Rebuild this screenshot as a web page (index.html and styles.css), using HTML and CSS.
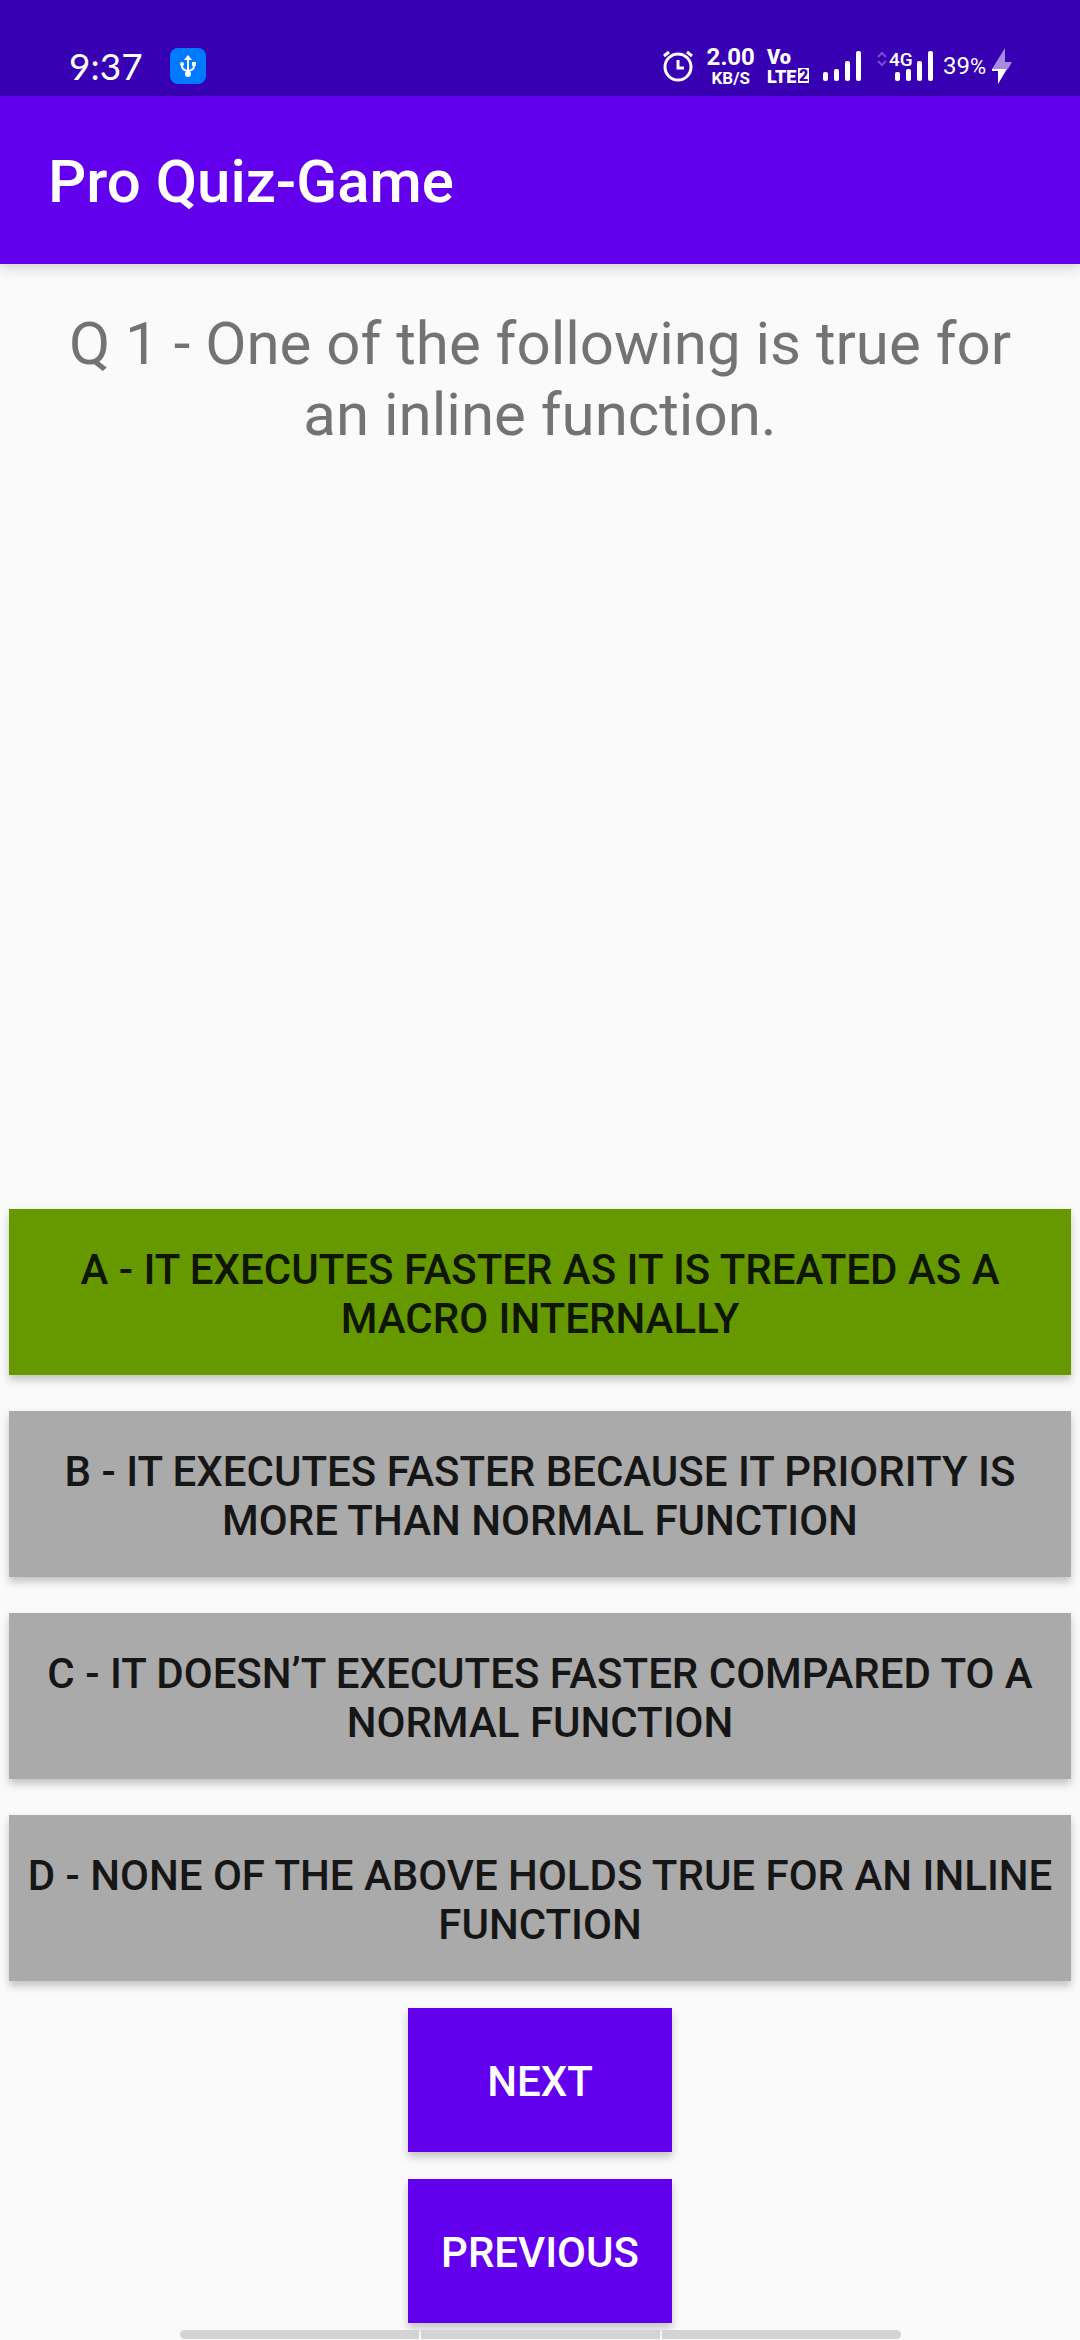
FILE: index.html
```html
<!DOCTYPE html>
<html lang="en">
<head>
<meta charset="utf-8">
<meta name="viewport" content="width=device-width, initial-scale=1">
<title>Pro Quiz-Game</title>
<link rel="stylesheet" href="styles.css">
</head>
<body>
<div class="status">
  <div class="status-left">
    <span class="clock">9:37</span>
    <svg class="usb" width="36" height="36" viewBox="0 0 36 36" aria-hidden="true">
      <rect width="36" height="36" rx="8" fill="#007aff"/>
      <g fill="none" stroke="#fff" stroke-width="2"><path d="M18 9v17M12 16v2q0 4 6 5q6-1 6-5v-2"/></g>
      <path d="M18 7l4 5h-8z" fill="#fff"/><circle cx="12" cy="16" r="2" fill="#fff"/><rect x="22" y="14" width="4" height="4" fill="#fff"/><circle cx="18" cy="26" r="3" fill="#fff"/>
    </svg>
  </div>
  <div class="status-right">
    <svg class="alarm" width="30" height="32" viewBox="0 0 30 32" aria-hidden="true">
      <g fill="none" stroke="#fff" stroke-width="3"><circle cx="15" cy="17" r="13"/><path d="M15 10v8h6M1 6l5-4M29 6l-5-4"/></g>
    </svg>
    <span class="speed"><b class="rate">2.00</b><b class="unit">KB/S</b></span>
    <svg class="volte" width="44" height="48" viewBox="0 -6 44 48" role="img" aria-label="VoLTE 2">
      <g fill="#fff"><text x="1" y="15" class="vo">Vo</text><text x="1" y="34" class="lte">LTE</text><rect x="32" y="19" width="11" height="15"/></g>
      <text x="33" y="32" class="sim">2</text>
    </svg>
    <svg class="signal" width="40" height="30" viewBox="0 0 40 30" aria-hidden="true">
      <g fill="#fff"><rect x="0" y="21" width="5" height="9" rx="2"/><rect x="11" y="18" width="5" height="12" rx="2"/><rect x="22" y="10" width="5" height="20" rx="2"/><rect x="33" y="0" width="5" height="30" rx="2"/></g>
    </svg>
    <svg class="signal4g" width="56" height="36" viewBox="0 -6 56 36" role="img" aria-label="4G signal">
      <g fill="none" stroke="#7350cb" stroke-width="2"><path d="M1 6l4-4l4 4M1 10l4 4l4-4"/></g>
      <g fill="#fff"><text x="12" y="15" class="net">4G</text><rect x="18" y="21" width="5" height="9" rx="2"/><rect x="29" y="18" width="5" height="12" rx="2"/><rect x="40" y="10" width="5" height="20" rx="2"/><rect x="51" y="0" width="5" height="30" rx="2"/></g>
    </svg>
    <span class="battery">39<span class="percent">%</span></span>
    <svg class="bolt" width="20" height="36" viewBox="0 0 20 36" aria-hidden="true">
      <path d="M13 0L13 14H20L16 21H0z" fill="#a68be0"/><path d="M0 21H15L6 36V23H0z" fill="#fff"/>
    </svg>
  </div>
</div>
<header class="appbar"><h1 class="title">Pro Quiz-Game</h1></header>
<main class="quiz">
  <p class="question">Q 1 - One of the following is true for an inline function.</p>
  <div class="options">
    <button class="option correct" type="button">A - It executes faster as it is treated as a macro internally</button>
    <button class="option" type="button">B - It executes faster because it priority is more than normal function</button>
    <button class="option" type="button">C - It doesn’t executes faster compared to a normal function</button>
    <button class="option" type="button">D - None of the above holds true for an inline function</button>
  </div>
  <div class="actions">
    <button class="action" type="button">Next</button>
    <button class="action" type="button">Previous</button>
  </div>
</main>
<div class="gesture" aria-hidden="true"><i class="bar"></i><i class="bar"></i><i class="bar"></i></div>
</body>
</html>
```
FILE: styles.css
```css
* { box-sizing: border-box; }
body {
  margin: 0;
  min-height: 100vh;
  display: flex;
  flex-direction: column;
  background: #fafafa;
  font-family: Roboto, "Liberation Sans", sans-serif;
}
.status {
  height: 96px;
  padding: 36px 68px 0 69px;
  display: flex;
  justify-content: space-between;
  background: #3700b3;
  color: #fff;
}
.status-left, .status-right { display: flex; align-items: flex-start; height: 60px; }
.status-left { gap: 27px; }
.clock { font: 37px/60px Lato, sans-serif; }
.usb { margin-top: 12px; }
.alarm { margin: 14px 14px 0 0; }
.speed { display: flex; flex-direction: column; align-items: center; margin: 8px 11px 0 0; }
.rate { font-size: 24px; line-height: 26px; }
.unit { font-size: 17px; line-height: 16px; }
.volte { margin: 7px 13px 0 0; }
.vo { font-size: 20px; font-weight: 900; }
.lte { font-size: 18px; font-weight: 900; }
.sim { font-size: 16px; font-weight: 900; fill: #3700b3; }
.net { font-size: 19px; font-weight: 500; }
.signal { margin: 15px 14px 0 0; }
.signal4g { margin: 9px 10px 0 0; }
.battery { font-size: 24px; line-height: 60px; margin-right: 6px; }
.percent { font-size: 22px; }
.bolt { margin-top: 12px; }
.appbar {
  height: 168px;
  padding: 4px 48px 0;
  display: flex;
  align-items: center;
  background: #6200ee;
  color: #fff;
  box-shadow: 0 4px 12px rgba(0, 0, 0, .16);
}
.title { margin: 0; font-size: 60px; line-height: 72px; font-weight: 500; }
.quiz { flex: 1; display: flex; flex-direction: column; padding: 44px 9px 0; }
.question {
  flex: 1;
  margin: 0;
  padding: 0 24px;
  font-size: 60px;
  line-height: 71px;
  text-align: center;
  color: #737373;
}
.options { display: flex; flex-direction: column; gap: 36px; }
.option, .action {
  border: 0;
  font: 500 42px/49px Roboto, "Liberation Sans", sans-serif;
  text-transform: uppercase;
  box-shadow: 0 5px 8px rgba(0, 0, 0, .22);
}
.option { padding: 36px 12px 32px; background: #aaa; color: #161616; }
.correct { background: #669900; color: #0e1500; }
.actions { display: flex; flex-direction: column; align-items: center; gap: 27px; padding: 27px 0 7px; }
.action { min-width: 264px; height: 144px; padding: 2px 24px 0; background: #6200ee; color: #fff; }
.gesture { display: flex; justify-content: center; gap: 2px; padding-bottom: 1px; }
.bar { flex: 0 0 239px; height: 9px; background: #d4d4d4; }
.bar:first-child { border-radius: 5px 0 0 5px; }
.bar:last-child { border-radius: 0 5px 5px 0; }
```
